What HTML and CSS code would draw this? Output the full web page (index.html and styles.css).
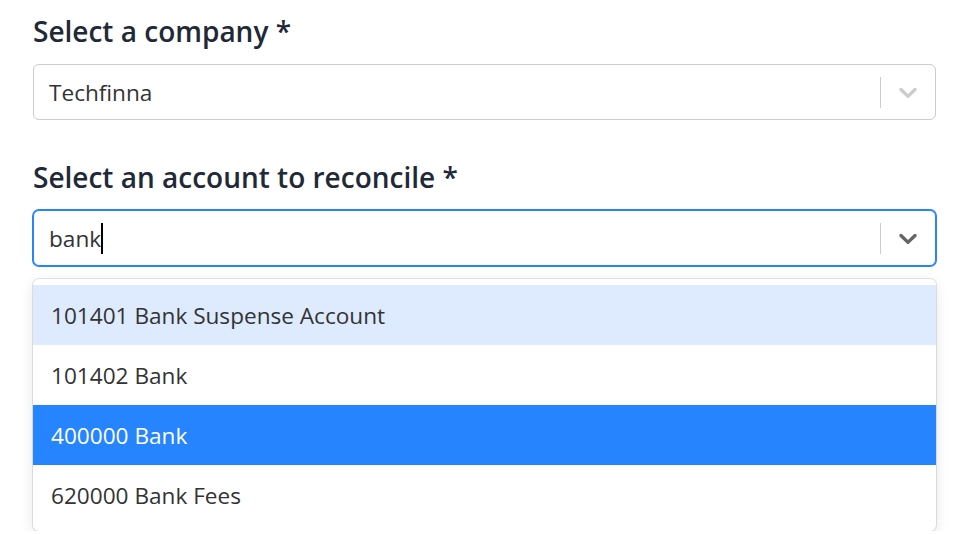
FILE: index.html
```html
<!DOCTYPE html>
<html lang="en">
<head>
<meta charset="utf-8">
<title>Reconcile</title>
<link rel="stylesheet" href="styles.css">
</head>
<body>
<div class="form">
  <div class="group">
    <label class="label">Select a company *</label>
    <div class="control">
      <div class="value">Techfinna</div>
      <div class="indicators">
        <span class="sep"></span>
        <span class="chev">
          <svg viewBox="0 0 20 20" width="30" height="30"><path d="M4.516 7.548c0.436-0.446 1.043-0.481 1.576 0l3.908 3.747 3.908-3.747c0.533-0.481 1.141-0.446 1.574 0 0.436 0.445 0.408 1.197 0 1.615-0.406 0.418-4.695 4.502-4.695 4.502-0.217 0.223-0.502 0.335-0.787 0.335s-0.57-0.112-0.789-0.335c0 0-4.287-4.084-4.695-4.502s-0.436-1.17 0-1.615z"/></svg>
        </span>
      </div>
    </div>
  </div>
  <div class="group">
    <label class="label">Select an account to reconcile *</label>
    <div class="select">
      <div class="control focused">
        <div class="value">bank<span class="caret"></span></div>
        <div class="indicators">
          <span class="sep"></span>
          <span class="chev">
            <svg viewBox="0 0 20 20" width="30" height="30"><path d="M4.516 7.548c0.436-0.446 1.043-0.481 1.576 0l3.908 3.747 3.908-3.747c0.533-0.481 1.141-0.446 1.574 0 0.436 0.445 0.408 1.197 0 1.615-0.406 0.418-4.695 4.502-4.695 4.502-0.217 0.223-0.502 0.335-0.787 0.335s-0.57-0.112-0.789-0.335c0 0-4.287-4.084-4.695-4.502s-0.436-1.17 0-1.615z"/></svg>
          </span>
        </div>
      </div>
      <div class="menu">
        <div class="option hover">101401 Bank Suspense Account</div>
        <div class="option">101402 Bank</div>
        <div class="option selected">400000 Bank</div>
        <div class="option">620000 Bank Fees</div>
      </div>
    </div>
  </div>
</div>
</body>
</html>
```
FILE: styles.css
```css
* { box-sizing: border-box; }
html, body { margin: 0; padding: 0; background: #fff; }
body {
  font-family: "Open Sans", "Noto Sans", sans-serif;
  color: #333;
}
.form {
  padding: 12px 35px 0 33px;
  display: flex;
  flex-direction: column;
  gap: 38px;
}
.group {
  display: flex;
  flex-direction: column;
  gap: 13px;
}
.label {
  font-size: 28px;
  font-weight: 600;
  line-height: 39px;
  color: #1f2937;
}
.control {
  height: 56px;
  border: 1px solid #cccccc;
  border-radius: 6px;
  display: flex;
  align-items: center;
  background: #fff;
}
.control.focused {
  border-color: #2684ff;
  box-shadow: 0 0 0 1px #2684ff;
}
.value {
  flex: 1;
  padding-left: 15px;
  font-size: 22.6px;
  color: #333;
  display: flex;
  align-items: center;
}
.caret {
  display: inline-block;
  width: 2px;
  height: 31px;
  background: #000;
}
.indicators {
  display: flex;
  align-items: center;
  align-self: stretch;
}
.sep {
  width: 1px;
  height: 31px;
  background: #cccccc;
}
.chev {
  padding: 0 12px;
  display: flex;
  fill: #cccccc;
}
.focused .chev { fill: #666666; }
.select {
  display: flex;
  flex-direction: column;
  gap: 13px;
}
.menu {
  border-radius: 6px;
  box-shadow: 0 0 0 1px rgba(0,0,0,0.1), 0 4px 14px rgba(0,0,0,0.1);
  padding: 6px 0;
  background: #fff;
}
.option {
  height: 60px;
  padding: 0 18px;
  display: flex;
  align-items: center;
  font-size: 22.6px;
  color: #333;
}
.option.hover { background: #deebff; }
.option.selected { background: #2684ff; color: #fff; }
```
